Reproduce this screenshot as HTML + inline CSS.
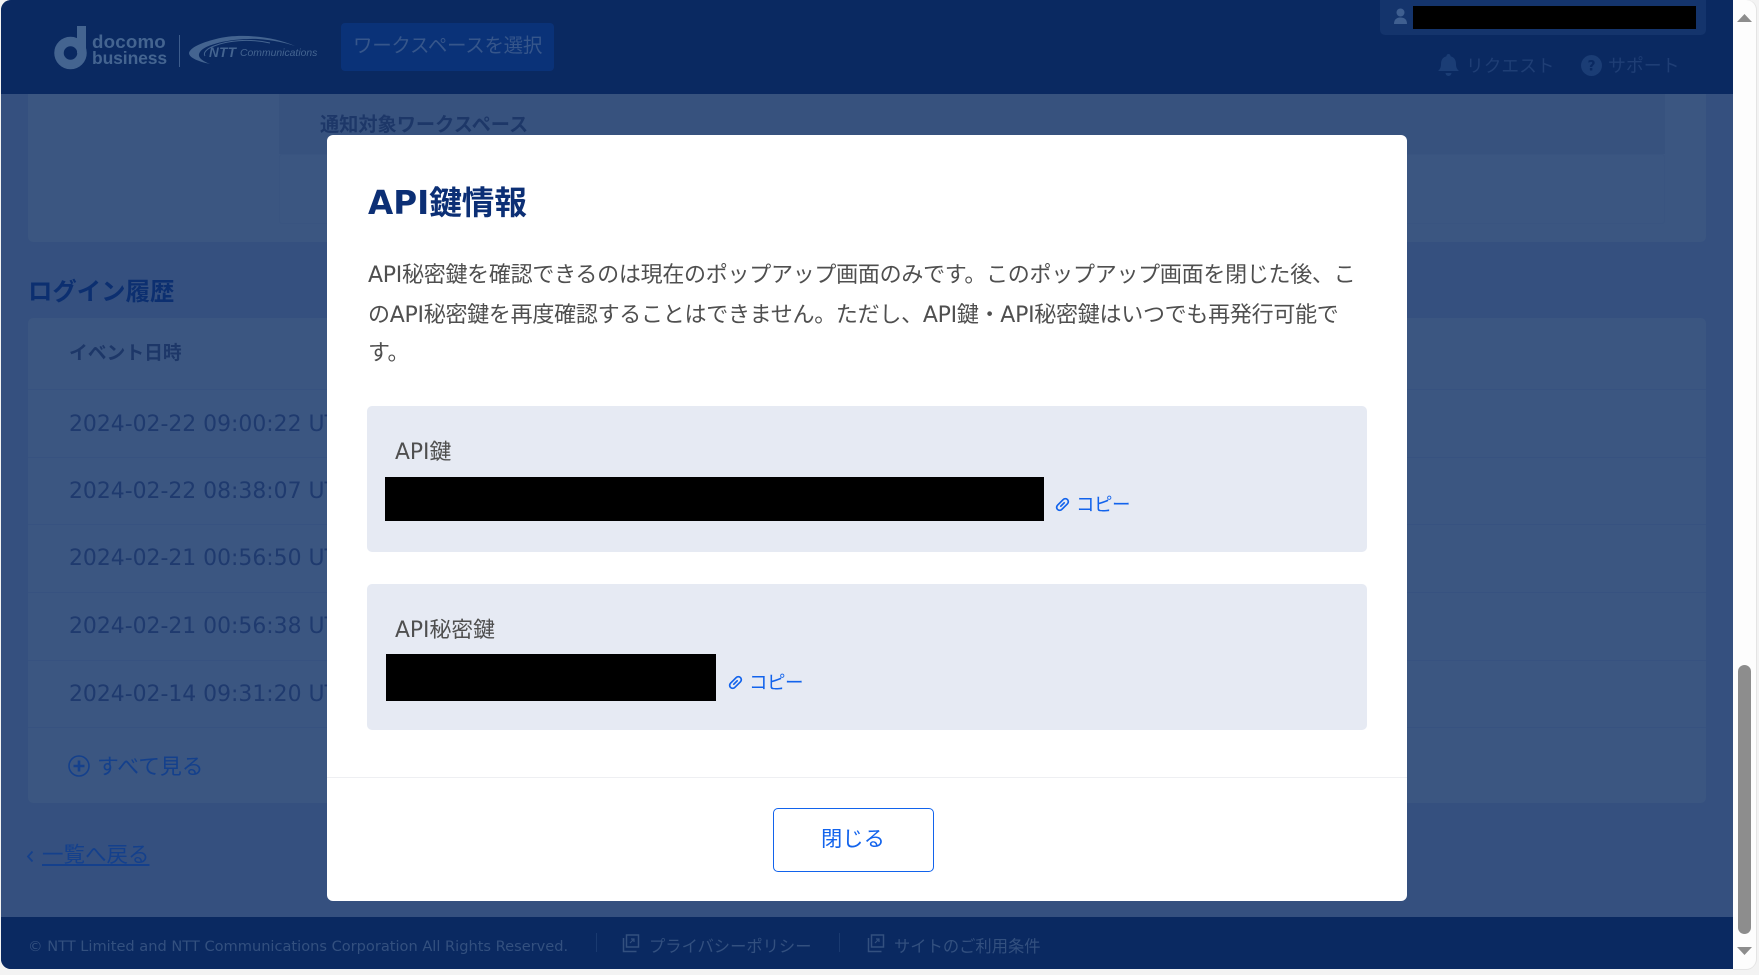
<!DOCTYPE html>
<html lang="ja"><head><meta charset="utf-8"><title>API鍵情報</title>
<style>
html,body{margin:0;padding:0;width:1759px;height:975px;overflow:hidden;background:#f3f3f3}
body{font-family:"DejaVu Sans","Noto Sans CJK JP",sans-serif;position:relative}
.a{position:absolute}
.t{position:absolute;white-space:nowrap;line-height:30px;height:30px}
.b{font-weight:700}
.line{position:absolute;left:28px;width:1678px;height:1px;background:#375280}
.date{color:#1f3a6e;font-size:21.900px;left:69px}
.body{color:#4f4f4f;font-size:22px;left:368px;letter-spacing:-.27px}
.link{color:#1263ec;font-size:18.500px;letter-spacing:-.5px}
.foot{color:#33507f;font-size:16.300px}
.logo{color:#446490;font-family:"Liberation Sans",sans-serif}
</style></head><body>
<div class="a" id="win" style="left:1px;top:0;width:1732px;height:969px;background:#35507f;border-radius:10px 0 0 10px;overflow:hidden">
<div class="a" style="left:-1px;top:0;width:1733px;height:975px">
<!-- cards -->
<div class="a" style="left:28px;top:80px;width:1678px;height:162px;background:#3b5681;border-radius:5px"></div>
<div class="a" style="left:279px;top:94px;width:1386px;height:60px;background:#37527e"></div>
<div class="a" style="left:279px;top:154px;width:1386px;height:70px;border:1px solid #395480;box-sizing:border-box;border-radius:3px"></div>
<div class="t b" style="left:320px;top:110px;color:#1d3768;font-size:19.200px">通知対象ワークスペース</div>
<div class="t b" style="left:28px;top:277px;color:#0c2f70;font-size:24.400px">ログイン履歴</div>
<div class="a" style="left:28px;top:318px;width:1678px;height:485px;background:#3b5681;border-radius:5px"></div>
<div class="t b" style="left:69px;top:339px;color:#1d3768;font-size:18.800px">イベント日時</div>
<div class="line" style="top:389px"></div><div class="line" style="top:457px"></div><div class="line" style="top:524px"></div><div class="line" style="top:592px"></div><div class="line" style="top:660px"></div><div class="line" style="top:727px"></div>
<div class="t date" style="top:410px">2024-02-22 09:00:22 UTC</div>
<div class="t date" style="top:477px">2024-02-22 08:38:07 UTC</div>
<div class="t date" style="top:544px">2024-02-21 00:56:50 UTC</div>
<div class="t date" style="top:612px">2024-02-21 00:56:38 UTC</div>
<div class="t date" style="top:680px">2024-02-14 09:31:20 UTC</div>
<svg class="a" style="left:68px;top:755px" width="22" height="22" viewBox="0 0 22 22"><circle cx="11" cy="11" r="10" fill="none" stroke="#14408c" stroke-width="1.600"/><path d="M11 5.500v11M5.500 11h11" stroke="#14408c" stroke-width="2.600"/></svg>
<div class="t" style="left:97px;top:753px;color:#14408c;font-size:21.800px">すべて見る</div>
<svg class="a" style="left:26px;top:850px" width="8" height="13" viewBox="0 0 8 13"><path d="M6.500 1.500L2 6.500l4.500 5" fill="none" stroke="#14408c" stroke-width="1.800"/></svg>
<div class="t" style="left:42px;top:841px;color:#14408c;font-size:21.500px;text-decoration:underline">一覧へ戻る</div>
<!-- header -->
<div class="a" style="left:0;top:0;width:1733px;height:94px;background:#0a2961"></div>
<svg class="a" style="left:54px;top:25px" width="34" height="45" viewBox="0 0 34 45"><circle cx="16.500" cy="28" r="11.500" fill="none" stroke="#446490" stroke-width="9.500"/><path d="M23 1h9v27h-9z" fill="#446490"/></svg>
<div class="t b logo" style="left:92px;top:27px;font-size:18.700px;letter-spacing:.2px">docomo</div>
<div class="t b logo" style="left:92px;top:43px;font-size:17.500px;letter-spacing:-.1px">business</div>
<div class="a" style="left:179px;top:35px;width:1px;height:32px;background:#3d5c8c"></div>
<svg class="a" style="left:188px;top:34px" width="112" height="32" viewBox="0 0 112 32"><path d="M107 12C85 2 50-1 28 5 12 9 2 14 1 19c0 4 7 8 21 11C12 26 9 22 12 18 17 10 45 4 70 5 85 6 98 9 107 12z" fill="#446490"/><path d="M82 9C60 4 38 7 26 12 18 15 15 19 17 22" fill="none" stroke="#446490" stroke-width="1"/></svg>
<div class="t b logo" style="left:209px;top:38px;font-size:13.500px;font-style:italic;letter-spacing:.4px">NTT</div>
<div class="t logo" style="left:240px;top:39px;font-size:10.400px;font-style:italic">Communications</div>
<div class="a" style="left:341px;top:23px;width:213px;height:48px;background:#0a3278;border-radius:4px"></div>
<div class="t" style="left:353px;top:31px;color:#36568b;font-size:19.500px;letter-spacing:-.3px">ワークスペースを選択</div>
<div class="a" style="left:1380px;top:-5px;width:326px;height:40px;background:#14346c;border-radius:5px"></div>
<svg class="a" style="left:1393px;top:8px" width="15" height="16" viewBox="0 0 15 16"><circle cx="7.500" cy="4.500" r="4" fill="#3f5f90"/><path d="M1 16c0-5 3-6.500 6.500-6.500S14 11 14 16z" fill="#3f5f90"/></svg>
<div class="a" style="left:1413px;top:6px;width:283px;height:23px;background:#000"></div>
<svg class="a" style="left:1438px;top:54px" width="21" height="23" viewBox="0 0 21 23"><path d="M10.500 0a2 2 0 0 1 2 2.200c4 1 5.500 4 5.500 8 0 3 1 5 3 6.800H0c2-1.800 3-3.800 3-6.800 0-4 1.500-7 5.500-8a2 2 0 0 1 2-2.200zM7.500 19h6a3 3 0 0 1-6 0z" fill="#1b3d75"/></svg>
<div class="t" style="left:1466px;top:52px;color:#1f3e75;font-size:17.700px">リクエスト</div>
<svg class="a" style="left:1581px;top:55px" width="21" height="21" viewBox="0 0 21 21"><circle cx="10.500" cy="10.500" r="10.500" fill="#1b3d75"/><text x="10.500" y="15.500" text-anchor="middle" font-family="DejaVu Sans,sans-serif" font-weight="700" font-size="14" fill="#0a2961">?</text></svg>
<div class="t" style="left:1608px;top:52px;color:#1f3e75;font-size:17.900px">サポート</div>
<!-- footer -->
<div class="a" style="left:0;top:917px;width:1733px;height:52px;background:#0a2961"></div>
<div class="t foot" style="left:28px;top:932px;font-size:14.590px">© NTT Limited and NTT Communications Corporation All Rights Reserved.</div>
<div class="a" style="left:596px;top:933px;width:1px;height:19px;background:#1a3a70"></div>
<svg class="a" style="left:622px;top:934px" width="18" height="19" viewBox="0 0 18 19"><path d="M4.500 1h12v12h-12zM1.500 4v13.500h13" fill="none" stroke="#33507f" stroke-width="1.500"/><path d="M8 9l4-4M9 5h3v3" fill="none" stroke="#33507f" stroke-width="1.200"/></svg>
<div class="t foot" style="left:649px;top:932px">プライバシーポリシー</div>
<div class="a" style="left:839px;top:933px;width:1px;height:19px;background:#1a3a70"></div>
<svg class="a" style="left:867px;top:934px" width="18" height="19" viewBox="0 0 18 19"><path d="M4.500 1h12v12h-12zM1.500 4v13.500h13" fill="none" stroke="#33507f" stroke-width="1.500"/><path d="M8 9l4-4M9 5h3v3" fill="none" stroke="#33507f" stroke-width="1.200"/></svg>
<div class="t foot" style="left:894px;top:932px">サイトのご利用条件</div>
</div></div>
<!-- scrollbar -->
<div class="a" style="left:1733px;top:0;width:23px;height:969px;background:#fdfdfd;border-radius:0 10px 10px 0;box-shadow:1px 0 0 #e4e4e4,0 1px 0 #e4e4e4"></div>
<svg class="a" style="left:1736px;top:13px" width="17" height="10" viewBox="0 0 17 10"><path d="M8.500 1L16 9H1z" fill="#8d8d8d"/></svg>
<div class="a" style="left:1738px;top:665px;width:13px;height:269px;background:#8d8d8d;border-radius:6.500px"></div>
<svg class="a" style="left:1736px;top:946px" width="17" height="10" viewBox="0 0 17 10"><path d="M1 1h15L8.500 9z" fill="#8d8d8d"/></svg>
<!-- modal -->
<div class="a" style="left:327px;top:135px;width:1080px;height:766px;background:#fff;border-radius:6px"></div>
<div class="t b" style="left:368px;top:187px;height:32px;line-height:32px;color:#0c2f75;font-size:32.600px">API鍵情報</div>
<div class="t body" style="top:261px">API秘密鍵を確認できるのは現在のポップアップ画面のみです。このポップアップ画面を閉じた後、こ</div>
<div class="t body" style="top:301px">のAPI秘密鍵を再度確認することはできません。ただし、API鍵・API秘密鍵はいつでも再発行可能で</div>
<div class="t body" style="top:339px">す。</div>
<div class="a" style="left:367px;top:406px;width:1000px;height:146px;background:#e6eaf3;border-radius:5px"></div>
<div class="t" style="left:395px;top:438px;color:#4f4f4f;font-size:21.800px">API鍵</div>
<div class="a" style="left:385px;top:477px;width:659px;height:44px;background:#000"></div>
<svg class="a" style="left:1055px;top:497px" width="15" height="15" viewBox="0 0 15 15"><g fill="none" stroke="#1263ec" stroke-width="1.700" stroke-linecap="round"><rect x="0.500" y="4.500" width="14" height="6" rx="3" transform="rotate(-45 7.500 7.500)"/><path d="M5.800 9.200L9.200 5.800"/></g></svg>
<div class="t link" style="left:1076px;top:491px">コピー</div>
<div class="a" style="left:367px;top:584px;width:1000px;height:146px;background:#e6eaf3;border-radius:5px"></div>
<div class="t" style="left:395px;top:616px;color:#4f4f4f;font-size:21.800px">API秘密鍵</div>
<div class="a" style="left:386px;top:654px;width:330px;height:47px;background:#000"></div>
<svg class="a" style="left:728px;top:675px" width="15" height="15" viewBox="0 0 15 15"><g fill="none" stroke="#1263ec" stroke-width="1.700" stroke-linecap="round"><rect x="0.500" y="4.500" width="14" height="6" rx="3" transform="rotate(-45 7.500 7.500)"/><path d="M5.800 9.200L9.200 5.800"/></g></svg>
<div class="t link" style="left:749px;top:669px">コピー</div>
<div class="a" style="left:327px;top:777px;width:1080px;height:1px;background:#eeeff2"></div>
<div class="a" style="left:773px;top:808px;width:161px;height:64px;box-sizing:border-box;border:1px solid #1263ec;border-radius:5px;background:#fff"></div>
<div class="t" style="left:821px;top:825px;color:#1263ec;font-size:21.300px">閉じる</div>
</body></html>
